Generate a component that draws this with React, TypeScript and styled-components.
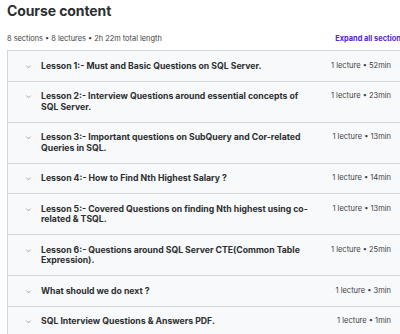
import { FC } from "react";
import styled, { createGlobalStyle } from "styled-components";

interface Section {
  title: string;
  meta: string;
}

const sections: Section[] = [
  { title: "Lesson 1:- Must and Basic Questions on SQL Server.", meta: "1 lecture • 52min" },
  { title: "Lesson 2:- Interview Questions around essential concepts of SQL Server.", meta: "1 lecture • 23min" },
  { title: "Lesson 3:- Important questions on SubQuery and Cor-related Queries in SQL.", meta: "1 lecture • 13min" },
  { title: "Lesson 4:- How to Find Nth Highest Salary ?", meta: "1 lecture • 14min" },
  { title: "Lesson 5:- Covered Questions on finding Nth highest using co-related & TSQL.", meta: "1 lecture • 13min" },
  { title: "Lesson 6:- Questions around SQL Server CTE(Common Table Expression).", meta: "1 lecture • 25min" },
  { title: "What should we do next ?", meta: "1 lecture • 3min" },
  { title: "SQL Interview Questions & Answers PDF.", meta: "1 lecture • 1min" },
];

const GlobalStyle = createGlobalStyle`
  html, body {
    margin: 0;
    padding: 0;
    overflow: hidden;
    background: #ffffff;
  }
  body {
    font-family: "Inter", "Noto Sans", sans-serif;
    color: #2d2f31;
  }
`;

const Page = styled.div`
  width: 398px;
  padding: 0 0 0 7px;
`;

const Heading = styled.h2`
  margin: 0;
  padding-top: 2px;
  font-size: 14px;
  line-height: 18px;
  font-weight: 700;
  letter-spacing: -0.1px;
`;

const Summary = styled.div`
  display: flex;
  justify-content: space-between;
  align-items: baseline;
  margin-top: 14px;
  padding-bottom: 6px;
  font-size: 7.4px;
  line-height: 10px;
`;

const Stats = styled.span`
  color: #3e4143;
`;

const ExpandLink = styled.span`
  color: #5624d0;
  font-weight: 700;
  white-space: nowrap;
`;

const Panel = styled.div`
  border: 1px solid #d1d7dc;
  border-right: none;
  border-bottom: none;
`;

const Row = styled.div`
  display: flex;
  align-items: flex-start;
  padding: 9.5px 14px 9.5px 17px;
  background: #f7f9fa;
  border-bottom: 1px solid #d1d7dc;
`;

const Chevron = styled.svg`
  flex: none;
  width: 7px;
  height: 7px;
  margin-top: 2px;
  margin-right: 9px;
`;

const Title = styled.div`
  width: 272px;
  font-size: 8.7px;
  line-height: 10.5px;
  font-weight: 700;
  color: #2d2f31;
`;

const Meta = styled.div`
  margin-left: auto;
  white-space: nowrap;
  font-size: 7.5px;
  line-height: 10.5px;
  color: #3e4143;
`;

const App: FC = () => (
  <Page>
    <GlobalStyle />
    <Heading>Course content</Heading>
    <Summary>
      <Stats>8 sections • 8 lectures • 2h 22m total length</Stats>
      <ExpandLink>Expand all sections</ExpandLink>
    </Summary>
    <Panel>
      {sections.map((s) => (
        <Row key={s.title}>
          <Chevron viewBox="0 0 8 8">
            <path d="M1.5 3 L4 5.5 L6.5 3" fill="none" stroke="#8a8f93" strokeWidth="0.9" />
          </Chevron>
          <Title>{s.title}</Title>
          <Meta>{s.meta}</Meta>
        </Row>
      ))}
    </Panel>
  </Page>
);

export default App;
